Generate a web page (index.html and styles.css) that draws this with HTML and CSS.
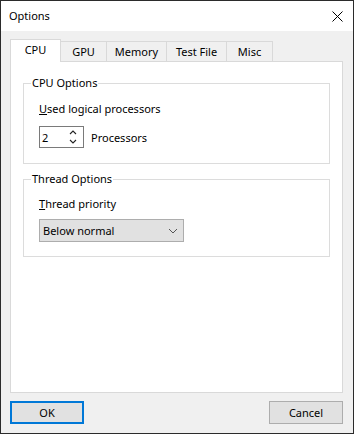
FILE: index.html
```html
<!DOCTYPE html>
<html>
<head>
<meta charset="utf-8">
<link rel="stylesheet" href="styles.css">
</head>
<body>
<div class="window">
  <div class="titlebar">
    <span class="title">Options</span>
    <svg class="close" width="11" height="11" viewBox="0 0 11 11"><path d="M0.5 0.5 L10.5 10.5 M10.5 0.5 L0.5 10.5" stroke="#000" stroke-width="1" fill="none"/></svg>
  </div>
  <div class="content">
    <div class="tabs">
      <div class="tab active">CPU</div>
      <div class="tab t-gpu">GPU</div>
      <div class="tab t-mem">Memory</div>
      <div class="tab t-file">Test File</div>
      <div class="tab t-misc">Misc</div>
    </div>
    <div class="panel">
      <fieldset class="group g-cpu">
        <legend>CPU Options</legend>
        <div class="label"><u>U</u>sed logical processors</div>
        <div class="row">
          <div class="spin">
            <span class="spin-value">2</span>
            <svg class="spin-arrows" width="8" height="16" viewBox="0 0 8 16"><path d="M1 5 L4 2 L7 5 M1 11 L4 14 L7 11" stroke="#222" stroke-width="1.1" fill="none"/></svg>
          </div>
          <span class="unit">Processors</span>
        </div>
      </fieldset>
      <fieldset class="group g-thread">
        <legend>Thread Options</legend>
        <div class="label"><u>T</u>hread priority</div>
        <div class="combo">
          <span>Below normal</span>
          <svg class="chev" width="10" height="6" viewBox="0 0 10 6"><path d="M1 1 L5 5 L9 1" stroke="#555" stroke-width="1" fill="none"/></svg>
        </div>
      </fieldset>
    </div>
    <div class="buttons">
      <div class="btn btn-default">OK</div>
      <div class="btn">Cancel</div>
    </div>
  </div>
</div>
</body>
</html>
```
FILE: styles.css
```css
html, body {
  margin: 0;
  padding: 0;
  background: #ffffff;
}
body {
  font-family: "Noto Sans", "Open Sans", sans-serif;
  font-size: 11px;
  color: #000;
}
.window {
  width: 354px;
  height: 434px;
  box-sizing: border-box;
  border: 1px solid #2b2b2b;
  display: flex;
  flex-direction: column;
}
.titlebar {
  height: 30px;
  background: #fff;
  display: flex;
  align-items: center;
  justify-content: space-between;
  padding: 0 10px 0 8px;
  flex: none;
}
.title {
  line-height: 16px;
}
.close {
  display: block;
}
.content {
  flex: 1;
  background: #f0f0f0;
  padding: 8px 10px 9px 9px;
  display: flex;
  flex-direction: column;
}
.tabs {
  height: 22px;
  display: flex;
  align-items: flex-end;
  flex: none;
}
.tab {
  box-sizing: border-box;
  height: 20px;
  border-top: 1px solid #d9d9d9;
  border-right: 1px solid #d9d9d9;
  background: #f0f0f0;
  text-align: center;
  line-height: 20px;
}
.tab.active {
  position: relative;
  z-index: 1;
  width: 51px;
  height: 23px;
  margin-bottom: -1px;
  background: #fff;
  border-left: 1px solid #d9d9d9;
  line-height: 20px;
}
.t-gpu { width: 46px; }
.t-mem { width: 60px; }
.t-file { width: 60px; }
.t-misc { width: 46px; }
.panel {
  flex: 1;
  background: #fff;
  border: 1px solid #d9d9d9;
  padding: 13px 12px 0 12px;
  display: flex;
  flex-direction: column;
}
.group {
  margin: 0;
  border: 1px solid #dcdcdc;
  padding: 10px 15px 15px 15px;
  min-width: 0;
}
.group legend {
  margin-left: -8px;
  padding: 0 1px;
  line-height: 16px;
}
.g-thread {
  margin-top: 7px;
  padding-top: 9px;
  padding-bottom: 14px;
}
.label {
  line-height: 16px;
}
.row {
  display: flex;
  align-items: center;
  margin-top: 9px;
}
.spin {
  box-sizing: border-box;
  width: 45px;
  height: 22px;
  border: 1px solid #7a7a7a;
  background: #fff;
  display: flex;
  align-items: center;
  justify-content: space-between;
  padding: 0 6px 0 2px;
}
.spin-arrows {
  display: block;
}
.unit {
  margin-left: 7px;
}
.combo {
  box-sizing: border-box;
  width: 145px;
  height: 23px;
  margin-top: 7px;
  border: 1px solid #adadad;
  background: #e1e1e1;
  display: flex;
  align-items: center;
  justify-content: space-between;
  padding: 0 5px 0 3px;
}
.chev {
  display: block;
}
.buttons {
  flex: none;
  display: flex;
  justify-content: space-between;
  margin-top: 8px;
}
.btn {
  box-sizing: border-box;
  width: 74px;
  height: 23px;
  border: 1px solid #adadad;
  background: #e1e1e1;
  display: flex;
  align-items: center;
  justify-content: center;
}
.btn-default {
  border: 2px solid #0078d7;
}
```
